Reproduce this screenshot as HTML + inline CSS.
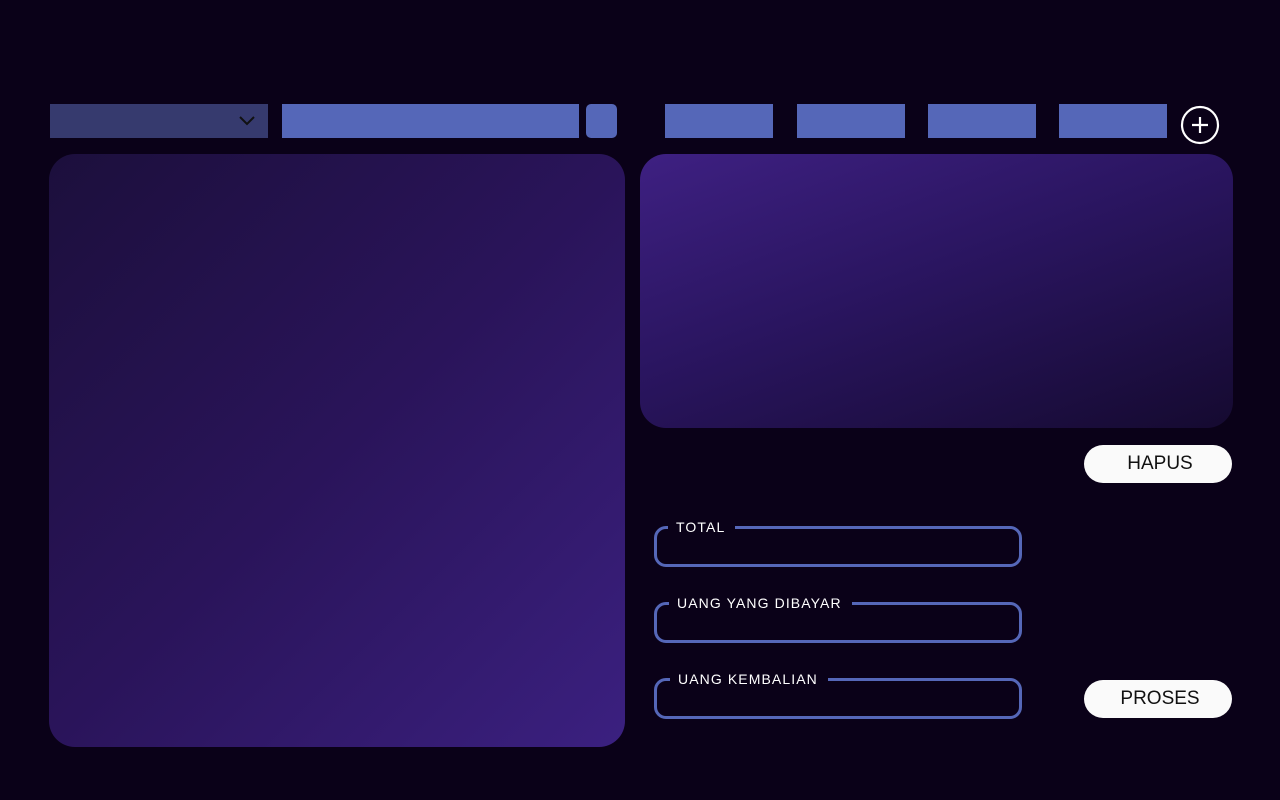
<!DOCTYPE html>
<html><head><style>
body{margin:0;width:1280px;height:800px;background:#0a0118;position:relative;overflow:hidden;font-family:"Liberation Sans",sans-serif}
div{position:absolute;box-sizing:border-box}
.b{background:#5567b8}
.fs{left:654px;width:368px;height:41px;border:3px solid #5567b8;border-radius:12px}
.lb{color:#fff;font-size:14px;background:#0a0118;padding:0 10px 0 8px;top:-10px;height:16px;line-height:16px;letter-spacing:1.1px}
.btn{left:1084px;width:148px;height:38px;background:#fafafa;border-radius:19px;color:#111;font-size:19px;text-align:center;line-height:38px;padding-left:4px}
</style></head><body>
<div style="left:50px;top:104px;width:218px;height:34px;background:#363a6e">
<svg style="position:absolute;left:188px;top:11px" width="18" height="12"><path d="M2 2 L9 9 L16 2" stroke="#111" stroke-width="2" fill="none"/></svg></div>
<div class="b" style="left:282px;top:104px;width:297px;height:34px"></div>
<div class="b" style="left:586px;top:104px;width:31px;height:34px;border-radius:5px"></div>
<div class="b" style="left:665px;top:104px;width:108px;height:34px"></div>
<div class="b" style="left:797px;top:104px;width:108px;height:34px"></div>
<div class="b" style="left:928px;top:104px;width:108px;height:34px"></div>
<div class="b" style="left:1059px;top:104px;width:108px;height:34px"></div>
<svg style="position:absolute;left:1180px;top:105px" width="40" height="40"><circle cx="20" cy="20" r="18" stroke="#fff" stroke-width="2.2" fill="none"/><path d="M20 12V28M12 20H28" stroke="#fff" stroke-width="2.2"/></svg>
<div style="left:49px;top:154px;width:576px;height:593px;border-radius:26px;background:linear-gradient(135deg,#1c0f3c 0%,#2a145a 50%,#3b2080 100%)"></div>
<div style="left:640px;top:154px;width:593px;height:274px;border-radius:26px;background:linear-gradient(160deg,#3e2082 0%,#2a1560 45%,#150a30 100%)"></div>
<div class="btn" style="top:445px">HAPUS</div>
<div class="btn" style="top:680px">PROSES</div>
<div class="fs" style="top:526px"><div class="lb" style="left:11px">TOTAL</div></div>
<div class="fs" style="top:602px"><div class="lb" style="left:12px">UANG YANG DIBAYAR</div></div>
<div class="fs" style="top:678px"><div class="lb" style="left:13px">UANG KEMBALIAN</div></div>
</body></html>
